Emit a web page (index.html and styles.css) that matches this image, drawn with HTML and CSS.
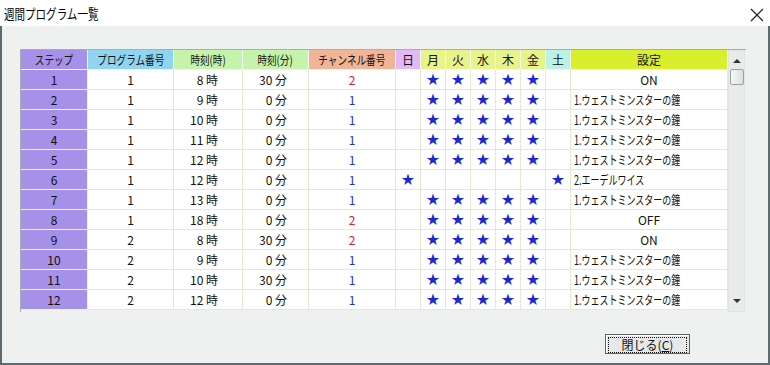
FILE: index.html
```html
<!DOCTYPE html>
<html lang="ja">
<head>
    <meta charset="UTF-8">
    <title>週間プログラム一覧</title>
    <link rel="stylesheet" href="styles.css">
</head>
<body>
    <div class="window">
        <div class="titlebar">
            <span class="title">週間プログラム一覧</span>
            <svg class="close" width="14" height="14" viewBox="0 0 14 14">
                <path d="M1 1 L13 13 M13 1 L1 13" stroke="#222" stroke-width="1.2" fill="none"/>
            </svg>
        </div>
        <div class="content">
            <div class="grid">
                <table>
                    <colgroup>
                        <col style="width:67px"><col style="width:86px"><col style="width:69px"><col style="width:66px">
                        <col style="width:87px"><col style="width:25px"><col style="width:25px"><col style="width:25px">
                        <col style="width:25px"><col style="width:25px"><col style="width:25px"><col style="width:25px">
                        <col style="width:157px">
                    </colgroup>
                    <thead>
                        <tr>
                            <th class="h-step"><span class="narrow">ステップ</span></th>
                            <th class="h-prog"><span class="narrow">プログラム番号</span></th>
                            <th class="h-time"><span class="narrow">時刻(時)</span></th>
                            <th class="h-time"><span class="narrow">時刻(分)</span></th>
                            <th class="h-ch"><span class="narrow">チャンネル番号</span></th>
                            <th class="h-sun">日</th>
                            <th class="h-wd">月</th>
                            <th class="h-wd">火</th>
                            <th class="h-wd">水</th>
                            <th class="h-wd">木</th>
                            <th class="h-wd">金</th>
                            <th class="h-sat">土</th>
                            <th class="h-set">設定</th>
                        </tr>
                    </thead>
                    <tbody id="rows"></tbody>
                </table>
                <div class="scrollbar">
                    <div class="arrow up"></div>
                    <div class="thumb"></div>
                    <div class="track"></div>
                    <div class="arrow down"></div>
                </div>
            </div>
            <div class="buttons">
                <button class="btn"><span class="focus">閉じる(<u>C</u>)</span></button>
            </div>
        </div>
    </div>
    <script>
        const WESTMINSTER = "1.ウェストミンスターの鐘";
        const weekdays = [0, 1, 1, 1, 1, 1, 0];
        const weekend = [1, 0, 0, 0, 0, 0, 1];
        const programs = [
            [1, 8, 30, 2, weekdays, "ON"],
            [1, 9, 0, 1, weekdays, WESTMINSTER],
            [1, 10, 0, 1, weekdays, WESTMINSTER],
            [1, 11, 0, 1, weekdays, WESTMINSTER],
            [1, 12, 0, 1, weekdays, WESTMINSTER],
            [1, 12, 0, 1, weekend, "2.エーデルワイス"],
            [1, 13, 0, 1, weekdays, WESTMINSTER],
            [1, 18, 0, 2, weekdays, "OFF"],
            [2, 8, 30, 2, weekdays, "ON"],
            [2, 9, 0, 1, weekdays, WESTMINSTER],
            [2, 10, 30, 1, weekdays, WESTMINSTER],
            [2, 12, 0, 1, weekdays, WESTMINSTER]
        ];

        const tbody = document.getElementById("rows");
        programs.forEach((p, i) => {
            const row = document.createElement("tr");
            const days = p[4].map(d => `<td class="day">${d ? "★" : ""}</td>`).join("");
            const isSwitch = p[5] === "ON" || p[5] === "OFF";
            const setting = isSwitch
                ? `<td class="setting center">${p[5]}</td>`
                : `<td class="setting left"><span class="narrow">${p[5]}</span></td>`;
            row.innerHTML = `<td class="step">${i + 1}</td>
                             <td>${p[0]}</td>
                             <td class="hour">${p[1]} 時</td>
                             <td class="min">${p[2]} 分</td>
                             <td class="${p[3] === 2 ? "ch-red" : "ch-blue"}">${p[3]}</td>
                             ${days}
                             ${setting}`;
            tbody.appendChild(row);
        });
    </script>
</body>
</html>
```

FILE: styles.css
```css
body {
    margin: 0;
    font-family: "Noto Sans CJK JP", "Liberation Sans", sans-serif;
    font-size: 12px;
    color: #111;
}
.window {
    width: 770px;
    height: 365px;
    box-sizing: border-box;
    border: 2px solid #5c6a72;
    border-top: none;
    background: #eff1f1;
    display: flex;
    flex-direction: column;
}
.titlebar {
    height: 26px;
    background: #fff;
    display: flex;
    align-items: center;
    justify-content: space-between;
    margin: 0 -2px;
    padding: 0 6px 0 4px;
}
.title {
    display: inline-block;
    font-size: 13.5px;
    color: #000;
    transform: scaleX(0.78);
    transform-origin: left center;
}
.close {
    margin-top: 4px;
}
.content {
    flex: 1;
    display: flex;
    flex-direction: column;
    padding: 23px 0 0 18px;
}
.grid {
    display: flex;
    align-items: flex-start;
    width: 725px;
    border-top: 1px solid #a7aeb2;
    border-left: 1px solid #a7aeb2;
}
table {
    table-layout: fixed;
    border-collapse: separate;
    border-spacing: 0;
    width: 707px;
    background: #fff;
}
th, td {
    height: 20px;
    box-sizing: border-box;
    padding: 0;
    text-align: center;
    font-weight: normal;
    white-space: nowrap;
    overflow: hidden;
    line-height: 18px;
}
th {
    border-right: 1px solid #f4f6f4;
    border-bottom: 1px solid #f4f6f4;
    color: #111;
}
td {
    border-right: 1px solid #e4ebcd;
    border-bottom: 1px solid #e4ebcd;
}
.narrow {
    display: inline-block;
    transform: scaleX(0.8);
}
.setting.left .narrow {
    transform: scaleX(0.72);
    transform-origin: left center;
}
.h-step, .step {
    background: #a590ea;
}
.step {
    border-right: 1px solid #eef0f4;
    border-bottom: 1px solid #eef0f4;
}
.h-prog { background: #8fd5f2; }
.h-time { background: #c6f3ac; }
.h-ch { background: #f2b497; }
.h-sun { background: #e2b9f2; }
.h-wd { background: #e8f38c; }
.h-sat { background: #baf2e4; }
.h-set { background: #d9ee2c; }
.hour {
    text-align: right;
    padding-right: 24px;
}
.min {
    text-align: right;
    padding-right: 21px;
}
.ch-red { color: #e0201c; }
.ch-blue { color: #1e30d8; }
.day {
    color: #1a28d6;
    font-family: "DejaVu Sans", sans-serif;
    font-size: 16px;
}
.setting.left {
    text-align: left;
    padding-left: 3px;
    font-size: 12.5px;
}
.scrollbar {
    width: 17px;
    height: 262px;
    box-sizing: border-box;
    background: #e9ebeb;
    border: 1px solid #dfe2e2;
    display: flex;
    flex-direction: column;
    align-items: center;
}
.arrow {
    width: 0;
    height: 0;
    border-left: 4px solid transparent;
    border-right: 4px solid transparent;
}
.arrow.up {
    margin-top: 8px;
    border-bottom: 4px solid #333;
}
.arrow.down {
    margin-bottom: 8px;
    border-top: 4px solid #333;
}
.thumb {
    width: 14px;
    height: 16px;
    margin-top: 6px;
    box-sizing: border-box;
    border: 1px solid #9aa0a6;
    border-radius: 2px;
    background: linear-gradient(to right, #f6f6f6, #dcdfe2);
}
.track {
    flex: 1;
}
.buttons {
    display: flex;
    justify-content: flex-end;
    padding-right: 78px;
    margin-top: 22px;
}
.btn {
    width: 85px;
    height: 20px;
    padding: 2px;
    border: 1px solid #56626c;
    background: #e6e8e9;
    font-family: inherit;
    font-size: 12px;
    color: #111;
    box-shadow: inset 1px 1px 0 #fff;
}
.focus {
    display: block;
    height: 14px;
    line-height: 13px;
    border: 1px dotted #111;
}
```
